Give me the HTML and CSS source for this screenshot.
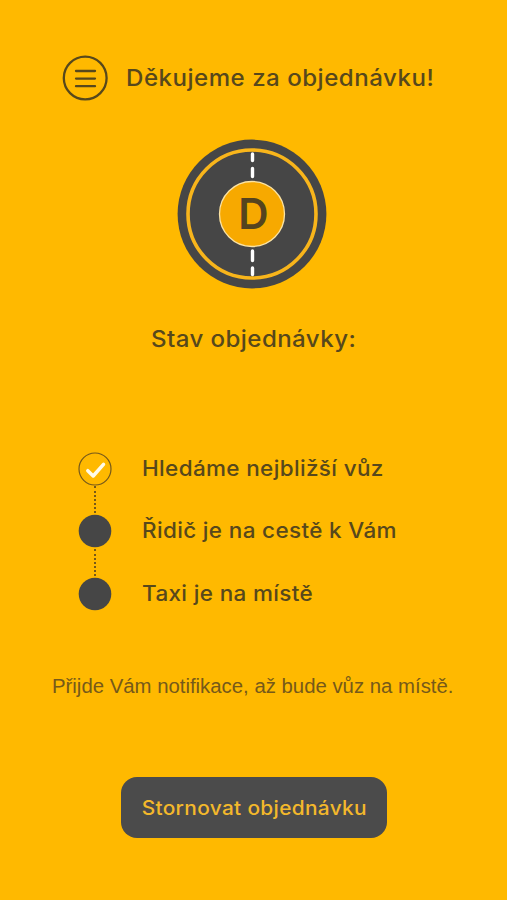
FILE: index.html
```
<!DOCTYPE html>
<html lang="cs">
<head>
<meta charset="utf-8">
<title>Děkujeme za objednávku!</title>
<link rel="stylesheet" href="styles.css">
</head>
<body>
<main class="screen">
  <header class="header">
    <button class="menu" aria-label="Menu">
      <svg width="46" height="46" viewBox="0 0 46 46"><circle cx="23.2" cy="23" r="21.4"/><path d="M14 16h19M14 23.6h19M14 31.2h19"/></svg>
    </button>
    <h1 class="title">Děkujeme za objednávku!</h1>
  </header>
  <svg class="logo" width="150" height="150" viewBox="0 0 150 150">
    <circle class="logo-road" cx="75" cy="75" r="74.4"/>
    <circle class="logo-ring" cx="75" cy="75" r="64"/>
    <path class="logo-lane" d="M75.5 15v6.5M75.5 29.5v8M75.5 112v9.5M75.5 129v6.5"/>
    <circle class="logo-core" cx="75" cy="75" r="32.5"/>
    <text class="logo-letter" x="76.5" y="90">D</text>
  </svg>
  <h2 class="status">Stav objednávky:</h2>
  <ol class="steps">
    <li class="step step-done">
      <svg class="marker" width="34" height="34" viewBox="0 0 34 34"><circle cx="17" cy="17" r="16"/><path d="M9.8 18.7l5.4 5.3L25.5 12.3"/></svg>
      <span class="label">Hledáme nejbližší vůz</span>
    </li>
    <li class="step">
      <svg class="marker" width="34" height="34" viewBox="0 0 34 34"><circle cx="17" cy="17" r="16.3"/></svg>
      <span class="label">Řidič je na cestě k Vám</span>
    </li>
    <li class="step">
      <svg class="marker" width="34" height="34" viewBox="0 0 34 34"><circle cx="17" cy="17" r="16.3"/></svg>
      <span class="label">Taxi je na místě</span>
    </li>
  </ol>
  <p class="note">Přijde Vám notifikace, až bude vůz na místě.</p>
  <button class="cancel"><span class="cancel-text">Stornovat objednávku</span></button>
</main>
</body>
</html>
```
FILE: styles.css
```
* { box-sizing: border-box; margin: 0; padding: 0; }
body { background: #ffb900; color: #57481c; font-family: Inter, sans-serif; font-weight: 500; }
button { border: 0; background: none; font: inherit; color: inherit; }
.screen { display: flex; flex-direction: column; width: 507px; height: 900px; padding-top: 55px; }
.header { display: flex; align-items: center; height: 46px; padding-left: 62px; }
.menu { display: flex; width: 46px; height: 46px; }
.menu svg { fill: none; stroke: #57481c; stroke-width: 2.3; stroke-linecap: round; }
.title, .status, .label { transform: scaleX(1.07); transform-origin: left center; white-space: nowrap; }
.title { margin-left: 18px; font-size: 22.5px; font-weight: 500; line-height: 30px; letter-spacing: 0.47px; }
.logo { display: block; margin: 38px 0 0 177px; }
.logo-road { fill: #464646; }
.logo-ring { fill: none; stroke: #f8b51b; stroke-width: 3.6; }
.logo-lane { fill: none; stroke: #fff; stroke-width: 3.4; stroke-linecap: round; }
.logo-core { fill: #f7a900; stroke: #fbe3a4; stroke-width: 1.3; }
.logo-letter { fill: #55431f; font-size: 42px; font-weight: 600; text-anchor: middle; }
.status { align-self: flex-start; margin: 34px 0 0 151px; font-size: 22.5px; font-weight: 500; line-height: 32px; letter-spacing: 0.4px; }
.steps { display: flex; flex-direction: column; gap: 28.4px; margin: 97px 0 0 77.5px; list-style: none; }
.step { position: relative; display: flex; align-items: center; height: 34px; }
.step + .step::before { content: ""; position: absolute; left: 16px; top: -28px; height: 27px; border-left: 2px dotted #76591a; }
.marker { flex: none; fill: #464646; }
.step-done circle { fill: none; stroke: #76591a; stroke-width: 1.2; }
.step-done path { fill: none; stroke: #fffbe9; stroke-width: 3.5; stroke-linecap: round; stroke-linejoin: round; }
.label { margin-left: 30.5px; font-size: 21px; line-height: 30px; letter-spacing: 0.33px; }
.note { margin: 63px 0 0 52px; color: #76591a; font: 400 20.35px/24px "Liberation Sans", sans-serif; white-space: nowrap; }
.cancel { display: flex; align-items: center; justify-content: center; width: 266px; height: 61px; margin: 79px 0 0 121px; border-radius: 16px; background: #4b4b4b; color: #f3b82b; font-size: 19.5px; letter-spacing: 0.31px; white-space: nowrap; }
.cancel-text { transform: translateY(1px) scaleX(1.07); }
```
